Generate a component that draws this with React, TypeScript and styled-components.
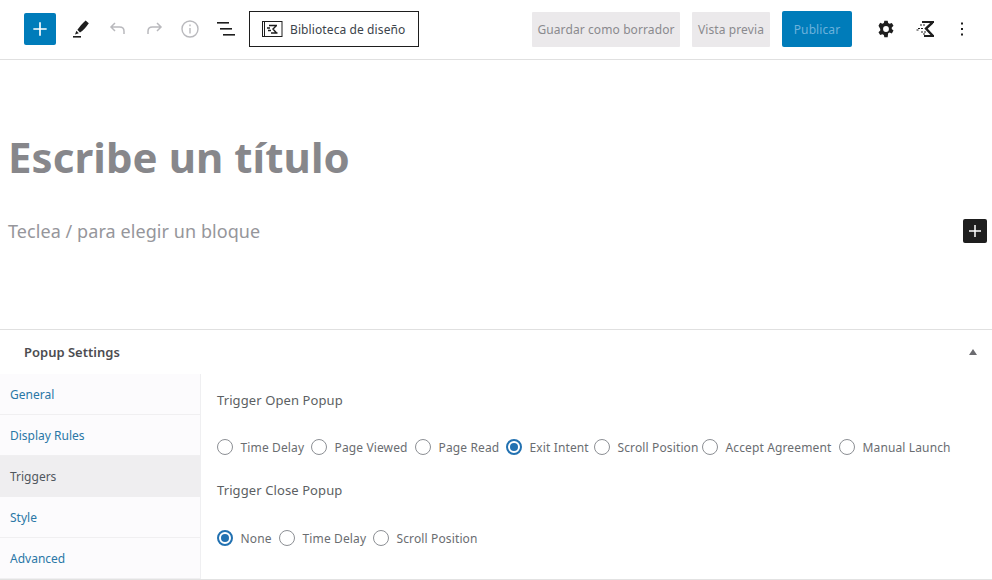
import React from "react";
import styled, { createGlobalStyle } from "styled-components";

const Global = createGlobalStyle`
  html, body { margin: 0; padding: 0; background: #fff; }
  body { font-family: "Noto Sans", "Open Sans", sans-serif; color: #50575e; }
  * { box-sizing: border-box; }
`;
const Page = styled.div`
  width: 992px; height: 580px; display: flex; flex-direction: column; overflow: hidden; background: #fff;
`;
const Toolbar = styled.header`
  height: 60px; flex: none; border-bottom: 1px solid #e0e0e0; display: flex; align-items: center;
  padding: 0 0 1px 24px;
`;
const AddButton = styled.div`
  width: 32px; height: 32px; background: #007cba; border-radius: 2px; color: #fff;
  display: flex; align-items: center; justify-content: center; margin-right: 14px;
`;
const ToolIcon = styled.div<{ $w?: number; $ml?: number }>`
  width: ${p => p.$w ?? 36}px; height: 36px; margin-left: ${p => p.$ml ?? 0}px;
  display: flex; align-items: center; justify-content: center; flex: none;
`;
const LibraryButton = styled.div`
  width: 170px; height: 36px; border: 1px solid #1e1e1e; margin-left: 5px; display: flex; align-items: center;
  padding: 1px 0 0 12px; gap: 7px; font-size: 12px; color: #3c434a; white-space: nowrap; letter-spacing: 0.1px;
`;
const Spacer = styled.div` flex: 1; `;
const GreyButton = styled.div<{ $w: number; $ml: number }>`
  width: ${p => p.$w}px; height: 35px; margin-left: ${p => p.$ml}px; background: #ebe9eb; color: #8a8a8e; border-radius: 1px;
  font-size: 12px; letter-spacing: 0.1px; padding-top: 1px; display: flex; align-items: center; justify-content: center; white-space: nowrap;
`;
const PublishButton = styled.div`
  width: 70px; height: 36px; margin-left: 12px; background: #007cba; border-radius: 2px; color: #6cb2dc; font-size: 12px;
  letter-spacing: 0.1px; padding-top: 1px; display: flex; align-items: center; justify-content: center;
`;
const RightIcons = styled.div` display: flex; align-items: center; margin: 0 12px 0 16px; `;
const Editor = styled.main` height: 269px; flex: none; display: flex; flex-direction: column; `;
const Title = styled.h1`
  margin: 66px 0 0 8px; font-size: 42px; line-height: 61px; font-weight: 700; color: #87878b; white-space: nowrap; letter-spacing: 0.06px;
`;
const BlockRow = styled.div`
  display: flex; align-items: center; justify-content: space-between; margin-top: 31px; padding: 0 5px 0 8px; height: 26px;
`;
const Placeholder = styled.p`
  margin: 0; font-size: 18px; color: #96969b; line-height: 26px; white-space: nowrap; letter-spacing: 0.07px;
`;
const BlockAdd = styled.div`
  width: 24px; height: 24px; background: #1e1e1e; border-radius: 2px; color: #fff;
  display: flex; align-items: center; justify-content: center;
`;
const Panel = styled.section`
  flex: 1; border-top: 1px solid #e0e0e0; border-bottom: 1px solid #e2e2e2; display: flex; flex-direction: column; min-height: 0;
`;
const PanelHead = styled.div`
  height: 44px; flex: none; display: flex; align-items: center; justify-content: space-between; padding: 0 15px 1px 24px;
  font-size: 13px; font-weight: 600; color: #4c4c50;
`;
const Caret = styled.div`
  width: 0; height: 0; border-left: 4.5px solid transparent; border-right: 4.5px solid transparent; border-bottom: 6px solid #6b6b70;
`;
const PanelBody = styled.div` flex: 1; display: flex; min-height: 0; `;
const Tabs = styled.nav`
  width: 201px; flex: none; background: #fcfbfd; border-right: 1px solid #efeff1; display: flex; flex-direction: column;
`;
const Tab = styled.div<{ $active?: boolean }>`
  height: 41px; flex: none; padding: 0 10px; display: flex; align-items: center; font-size: 12px;
  color: ${p => (p.$active ? "#50575e" : "#2a77a6")};
  background: ${p => (p.$active ? "#efeef0" : "transparent")};
  border-bottom: 1px solid ${p => (p.$active ? "#efeef0" : "#f0eff1")};
`;
const Content = styled.div` flex: 1; padding: 16px 0 0 16px; display: flex; flex-direction: column; `;
const Label = styled.div<{ $mt?: number }>`
  font-size: 13px; line-height: 20px; color: #5c5f63; margin-top: ${p => p.$mt ?? 0}px; letter-spacing: 0.1px;
`;
const RadioRow = styled.div<{ $mt: number }>`
  display: flex; align-items: center; margin-top: ${p => p.$mt}px; height: 20px;
`;
const RadioItem = styled.label<{ $w: number }>`
  width: ${p => p.$w}px; flex: none; display: flex; align-items: center; gap: 7.5px; font-size: 12px; color: #6a6d71; white-space: nowrap; letter-spacing: 0.13px;
`;
const RadioMark = styled.span<{ $on?: boolean }>`
  width: 16px; height: 16px; border-radius: 50%; flex: none; display: flex; align-items: center; justify-content: center;
  border: ${p => (p.$on ? "2px solid #2271b1" : "1px solid #8c8f94")}; background: #fff;
  &::after {
    content: ""; width: 8px; height: 8px; border-radius: 50%; background: ${p => (p.$on ? "#2271b1" : "transparent")};
  }
`;

const Plus = ({ size, weight = 2 }: { size: number; weight?: number }) => (
  <svg width={size} height={size} viewBox="0 0 24 24" fill="none" stroke="currentColor" strokeWidth={weight}>
    <path d="M12 4v16M4 12h16" />
  </svg>
);
const BrandMark = ({ size }: { size: number }) => (
  <svg width={size} height={size} viewBox="0 0 20 20" fill="none" stroke="#1e1e1e">
    <path d="M6 3h12" strokeWidth="2" />
    <path d="M16.5 3.5L10 9.5l7 7.5" strokeWidth="2.4" />
    <path d="M8 17h10" strokeWidth="2" />
    <path d="M4 6h6M2 9.5h5M0.5 11h3M5 13h5M7 15h3" strokeWidth="1.2" strokeDasharray="2 1" />
  </svg>
);

const topOptions = [
  ["Time Delay", 94], ["Page Viewed", 104], ["Page Read", 91], ["Exit Intent", 88],
  ["Scroll Position", 108], ["Accept Agreement", 137], ["Manual Launch", 120],
] as const;
const closeOptions = [["None", 62], ["Time Delay", 94], ["Scroll Position", 120]] as const;

export default function App() {
  return (
    <Page>
      <Global />
      <Toolbar>
        <AddButton><Plus size={20} /></AddButton>
        <ToolIcon $w={22}>
          <svg width="20" height="20" viewBox="0 0 20 20" fill="#1e1e1e">
            <path d="M14.6 1.6l3.2 2.6c-2.6 4-5.4 7-8.8 9.2l-2.6-2.6C8.6 7.8 11.4 4.4 14.6 1.6z" />
            <path d="M5.4 11.8l2.4 2.4-3.8 1.2z" />
            <rect x="2" y="17" width="8" height="1.6" />
          </svg>
        </ToolIcon>
        <ToolIcon $ml={8}>
          <svg width="20" height="20" viewBox="0 0 20 20" fill="none" stroke="#b9b9bd" strokeWidth="1.5">
            <path d="M7 4L3 8l4 4M3 8h8.5c3 0 4.5 2 4.5 4.2V15" />
          </svg>
        </ToolIcon>
        <ToolIcon>
          <svg width="20" height="20" viewBox="0 0 20 20" fill="none" stroke="#b9b9bd" strokeWidth="1.5">
            <path d="M13 4l4 4-4 4M17 8H8.5C5.5 8 4 10 4 12.2V15" />
          </svg>
        </ToolIcon>
        <ToolIcon>
          <svg width="20" height="20" viewBox="0 0 20 20" fill="none" stroke="#b9b9bd" strokeWidth="1.4">
            <circle cx="10" cy="10" r="8" />
            <path d="M10 9v5.5M10 5.5v1.8" />
          </svg>
        </ToolIcon>
        <ToolIcon>
          <svg width="20" height="20" viewBox="0 0 20 20" fill="#1e1e1e">
            <rect x="1" y="3" width="12" height="1.6" />
            <rect x="4" y="9" width="12" height="1.6" />
            <rect x="7" y="15" width="12" height="1.6" />
          </svg>
        </ToolIcon>
        <LibraryButton>
          <svg width="21" height="18" viewBox="0 0 21 18" fill="none" stroke="#1e1e1e">
            <rect x="0.5" y="0.5" width="19.5" height="15" strokeWidth="1" />
            <path d="M2.5 1v14.5h17" strokeWidth="1" />
            <path d="M7 4.5h8M14.5 4.5L11 8l3.5 4M9 12h6.5M5 7h3M6 9.5h3" strokeWidth="1.4" />
          </svg>
          Biblioteca de diseño
        </LibraryButton>
        <Spacer />
        <GreyButton $w={148} $ml={0}>Guardar como borrador</GreyButton>
        <GreyButton $w={78} $ml={12}>Vista previa</GreyButton>
        <PublishButton>Publicar</PublishButton>
        <RightIcons>
          <ToolIcon>
            <svg width="20" height="20" viewBox="0 0 24 24" fill="#1e1e1e">
              <path fillRule="evenodd" d="M10 2h4l.6 2.8 1.7.9 2.7-1 2 3.5-2.1 1.9v1.8l2.1 1.9-2 3.5-2.7-1-1.7.9L14 22h-4l-.6-2.8-1.7-.9-2.7 1-2-3.5 2.1-1.9v-1.8L3 8.1l2-3.5 2.7 1 1.7-.9L10 2zm2 6.5a3.5 3.5 0 100 7 3.5 3.5 0 000-7z" />
            </svg>
          </ToolIcon>
          <ToolIcon $ml={4}><BrandMark size={20} /></ToolIcon>
          <ToolIcon>
            <svg width="20" height="20" viewBox="0 0 20 20" fill="#1e1e1e">
              <rect x="9" y="3.5" width="2" height="2" />
              <rect x="9" y="9" width="2" height="2" />
              <rect x="9" y="14.5" width="2" height="2" />
            </svg>
          </ToolIcon>
        </RightIcons>
      </Toolbar>
      <Editor>
        <Title>Escribe un título</Title>
        <BlockRow>
          <Placeholder>Teclea / para elegir un bloque</Placeholder>
          <BlockAdd><Plus size={18} /></BlockAdd>
        </BlockRow>
      </Editor>
      <Panel>
        <PanelHead>
          Popup Settings
          <Caret />
        </PanelHead>
        <PanelBody>
          <Tabs>
            <Tab>General</Tab>
            <Tab>Display Rules</Tab>
            <Tab $active>Triggers</Tab>
            <Tab>Style</Tab>
            <Tab>Advanced</Tab>
          </Tabs>
          <Content>
            <Label>Trigger Open Popup</Label>
            <RadioRow $mt={27}>
              {topOptions.map(([t, w]) => (
                <RadioItem key={t} $w={w}><RadioMark $on={t === "Exit Intent"} />{t}</RadioItem>
              ))}
            </RadioRow>
            <Label $mt={23}>Trigger Close Popup</Label>
            <RadioRow $mt={28}>
              {closeOptions.map(([t, w]) => (
                <RadioItem key={t} $w={w}><RadioMark $on={t === "None"} />{t}</RadioItem>
              ))}
            </RadioRow>
          </Content>
        </PanelBody>
      </Panel>
    </Page>
  );
}
